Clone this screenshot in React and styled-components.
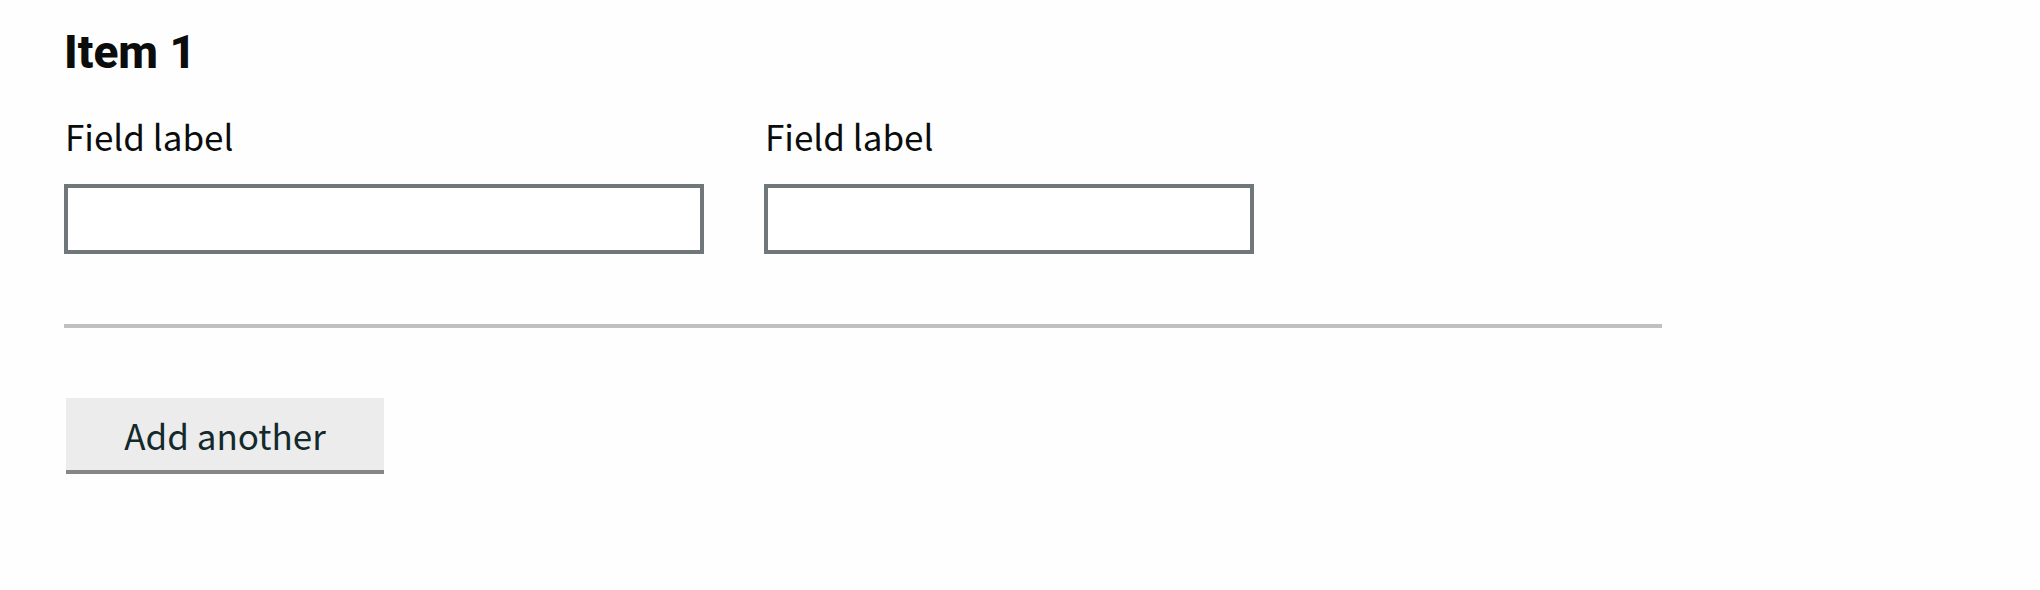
import React from "react";
import styled, { createGlobalStyle } from "styled-components";

const GlobalStyle = createGlobalStyle`
  *, *::before, *::after { box-sizing: border-box; }
  body {
    margin: 0;
    background: #fefefe;
    color: #0b0c0c;
    font-family: "Noto Sans CJK SC", "Noto Sans", Arial, sans-serif;
  }
`;

const Page = styled.main`
  padding: 24px 64px;
`;

const Form = styled.form`
  max-width: 1598px;
`;

const Item = styled.fieldset`
  min-width: 0;
  margin: 0;
  padding: 0;
  border: 0;
`;

const ItemHeading = styled.h2`
  margin: 0 0 28px;
  font-family: Roboto, Arial, sans-serif;
  font-size: 46px;
  font-weight: 800;
  line-height: 56px;
`;

const Fields = styled.div`
  display: flex;
  gap: 60px;
`;

const Field = styled.div`
  display: flex;
  flex: 0 1 ${({ $width }) => $width}px;
  flex-direction: column;
  gap: 20px;
  min-width: 0;
`;

const Label = styled.label`
  padding-left: 1px;
  font-size: 35px;
  line-height: 56px;
`;

const TextInput = styled.input`
  width: 100%;
  height: 70px;
  padding: 8px;
  border: 4px solid #6f777b;
  border-radius: 0;
  background: #ffffff;
  color: inherit;
  font: inherit;
  font-size: 35px;
`;

const Divider = styled.hr`
  height: 4px;
  margin: 70px 0;
  border: 0;
  background: #c0c0c0;
`;

const AddButton = styled.button`
  display: block;
  width: 318px;
  height: 76px;
  margin: 0 2px;
  padding: 2px 0 0;
  border: 0;
  border-bottom: 4px solid #858686;
  border-radius: 0;
  background: #ececec;
  color: #13292b;
  font-family: inherit;
  font-size: 35px;
  line-height: 56px;
`;

export default function App() {
  return (
    <>
      <GlobalStyle />
      <Page>
        <Form>
          <Item aria-labelledby="item-1">
            <ItemHeading id="item-1">Item 1</ItemHeading>
            <Fields>
              <Field $width={640}>
                <Label htmlFor="field-1">Field label</Label>
                <TextInput id="field-1" type="text" />
              </Field>
              <Field $width={490}>
                <Label htmlFor="field-2">Field label</Label>
                <TextInput id="field-2" type="text" />
              </Field>
            </Fields>
          </Item>
          <Divider />
          <AddButton type="button">Add another</AddButton>
        </Form>
      </Page>
    </>
  );
}
